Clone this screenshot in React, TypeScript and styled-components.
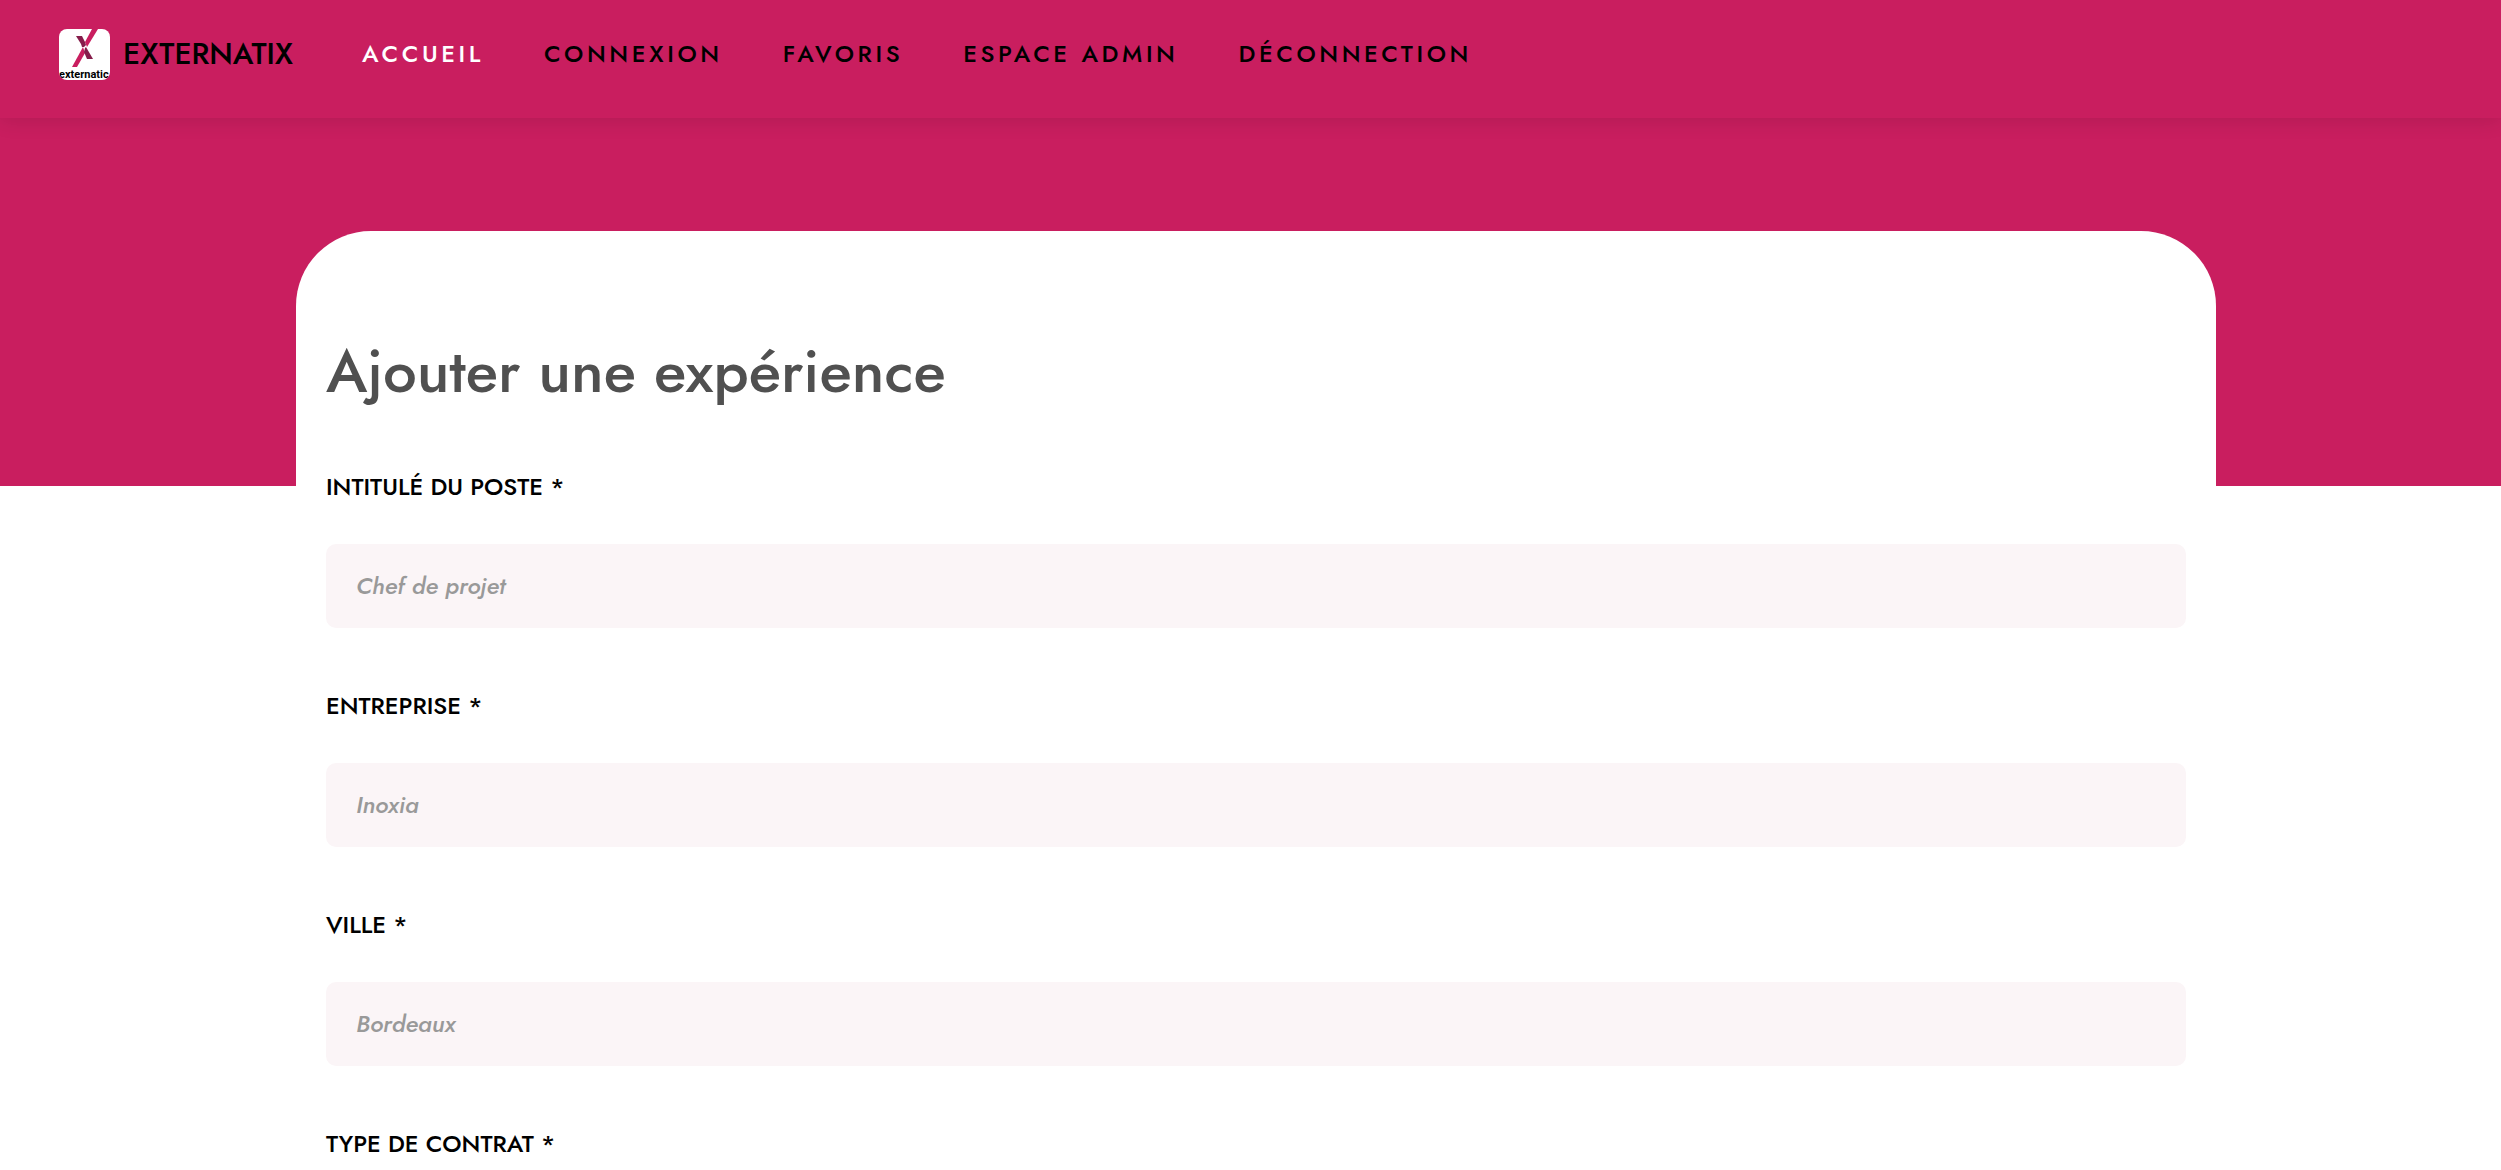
import React from 'react';
import styled, { createGlobalStyle } from 'styled-components';

const PINK = '#c91e5f';

const GlobalStyle = createGlobalStyle`
  *, *::before, *::after { box-sizing: border-box; }
  body {
    margin: 0;
    background: #fff;
    color: #000;
    font-family: Jost, Lato, "Open Sans", sans-serif;
    font-weight: 500;
  }
`;

const Page = styled.div`
  display: flex;
  flex-direction: column;
  height: 100vh;
`;

const Header = styled.header`
  position: relative;
  z-index: 1;
  display: flex;
  flex: none;
  align-items: center;
  gap: 69px;
  padding: 20px 59px 30px;
  background: ${PINK};
  box-shadow: 0 2px 20px rgba(0, 0, 0, 0.12);
`;

const Brand = styled.a`
  display: flex;
  align-items: center;
  gap: 13px;
  color: #000;
  font-size: 30px;
  line-height: 68px;
  text-decoration: none;
`;

const Logo = styled.svg`
  width: 51px;
  height: 51px;
  border-radius: 8px;
  background: #fff;
`;

const Nav = styled.nav`
  display: flex;
  gap: 60px;
`;

const NavLink = styled.a<{ $active?: boolean }>`
  color: ${({ $active }) => ($active ? '#fff' : '#000')};
  font-size: 24px;
  letter-spacing: 0.15em;
  line-height: 36px;
  text-decoration: none;
`;

const Main = styled.main`
  flex: 1;
  min-height: 0;
  padding: 113px 0 0 11px;
  overflow-y: auto;
  scrollbar-width: none;
  background: linear-gradient(${PINK} 368px, #fff 368px);
`;

const Card = styled.form`
  width: 100%;
  max-width: 1920px;
  margin: 0 auto;
  padding: 96px 30px 60px;
  border-radius: 75px 75px 0 0;
  background: #fff;
`;

const Title = styled.h1`
  margin: 0 0 52px;
  color: #505050;
  font-size: 60px;
  font-weight: 500;
  line-height: 90px;
`;

const Fields = styled.div`
  display: flex;
  flex-direction: column;
  gap: 60px;
`;

const FieldBox = styled.div`
  display: flex;
  flex-direction: column;
  gap: 39px;
`;

const Label = styled.label`
  font-size: 24px;
  line-height: 36px;
  text-transform: uppercase;
`;

const Input = styled.input`
  width: 100%;
  height: 84px;
  padding: 0 30px 2px;
  border: 0;
  border-radius: 10px;
  background: #fbf5f7;
  font: inherit;
  font-size: 24px;

  &::placeholder {
    color: #999;
    font-style: italic;
    opacity: 1;
  }
`;

const Select = styled(Input)``;

const links = ['ACCUEIL', 'CONNEXION', 'FAVORIS', 'ESPACE ADMIN', 'DÉCONNECTION'];

const fields = [
  { id: 'poste', label: 'Intitulé du poste *', placeholder: 'Chef de projet' },
  { id: 'entreprise', label: 'Entreprise *', placeholder: 'Inoxia' },
  { id: 'ville', label: 'Ville *', placeholder: 'Bordeaux' },
];

function BrandLogo() {
  return (
    <Logo viewBox="0 0 51 51" aria-hidden="true">
      <path d="M33 0h6L28 18l-2-5z" fill={PINK} />
      <path d="M17 7h6l3 6 1 3-2 2h-2l-1-3z" fill="#861d4b" />
      <path d="M24 18l2 6-8 14h-5z" fill={PINK} />
      <path d="M27 18l7 12h-6l-3-7 1-4z" fill="#861d4b" />
      <text x="0" y="49" fontFamily='Roboto, "Liberation Sans", sans-serif' fontWeight="700" fontSize="11">
        externatic
      </text>
    </Logo>
  );
}

export default function App() {
  return (
    <Page>
      <GlobalStyle />
      <Header>
        <Brand href="#">
          <BrandLogo />
          EXTERNATIX
        </Brand>
        <Nav>
          {links.map((link, i) => (
            <NavLink key={link} href="#" $active={i === 0}>
              {link}
            </NavLink>
          ))}
        </Nav>
      </Header>
      <Main>
        <Card>
          <Title>Ajouter une expérience</Title>
          <Fields>
            {fields.map((f) => (
              <FieldBox key={f.id}>
                <Label htmlFor={f.id}>{f.label}</Label>
                <Input id={f.id} placeholder={f.placeholder} />
              </FieldBox>
            ))}
            <FieldBox>
              <Label htmlFor="contrat">Type de contrat *</Label>
              <Select as="select" id="contrat" />
            </FieldBox>
          </Fields>
        </Card>
      </Main>
    </Page>
  );
}
